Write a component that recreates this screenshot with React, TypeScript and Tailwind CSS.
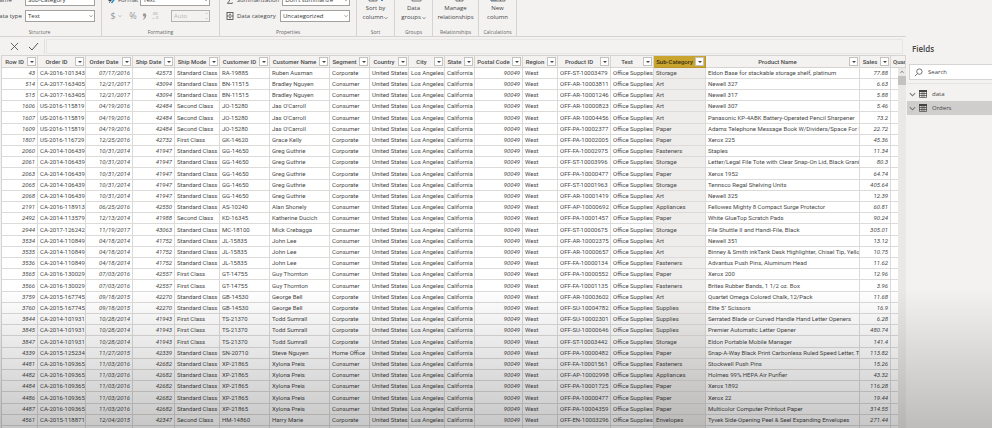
import type { ReactNode } from 'react';

type Column = {
  name: string;
  width: string;
  numeric?: boolean;
  selected?: boolean;
};

const COLUMNS: Column[] = [
  { name: 'Row ID', width: 'w-[36px]', numeric: true },
  { name: 'Order ID', width: 'w-[48px]' },
  { name: 'Order Date', width: 'w-[47px]', numeric: true },
  { name: 'Ship Date', width: 'w-[42px]', numeric: true },
  { name: 'Ship Mode', width: 'w-[45px]' },
  { name: 'Customer ID', width: 'w-[50px]' },
  { name: 'Customer Name', width: 'w-[60px]' },
  { name: 'Segment', width: 'w-[40px]' },
  { name: 'Country', width: 'w-[39px]' },
  { name: 'City', width: 'w-[36px]' },
  { name: 'State', width: 'w-[30px]' },
  { name: 'Postal Code', width: 'w-[48px]', numeric: true },
  { name: 'Region', width: 'w-[35px]' },
  { name: 'Product ID', width: 'w-[53px]' },
  { name: 'Test', width: 'w-[43px]' },
  { name: 'Sub-Category', width: 'w-[52px]', selected: true },
  { name: 'Product Name', width: 'w-auto' },
  { name: 'Sales', width: 'w-[31px]', numeric: true },
  { name: 'Quantity', width: 'w-[15px]' },
];

// row id | order id | order date | ship date | ship mode | customer id | customer | segment | product id | sub-category | product | sales
const ORDERS = `
43|CA-2016-101343|07/17/2016|42573|Standard Class|RA-19885|Ruben Ausman|Corporate|OFF-ST-10003479|Storage|Eldon Base for stackable storage shelf, platinum|77.88
514|CA-2017-163405|12/21/2017|43094|Standard Class|BN-11515|Bradley Nguyen|Consumer|OFF-AR-10003811|Art|Newell 327|6.63
515|CA-2017-163405|12/21/2017|43094|Standard Class|BN-11515|Bradley Nguyen|Consumer|OFF-AR-10001246|Art|Newell 317|5.88
1606|US-2016-115819|04/19/2016|42484|Second Class|JO-15280|Jas O'Carroll|Consumer|OFF-AR-10000823|Art|Newell 307|5.46
1607|US-2016-115819|04/19/2016|42484|Second Class|JO-15280|Jas O'Carroll|Consumer|OFF-AR-10004456|Art|Panasonic KP-4ABK Battery-Operated Pencil Sharpener|73.2
1609|US-2016-115819|04/19/2016|42484|Second Class|JO-15280|Jas O'Carroll|Consumer|OFF-PA-10002377|Paper|Adams Telephone Message Book W/Dividers/Space For Ph|22.72
1807|US-2016-116729|12/25/2016|42732|First Class|GK-14620|Grace Kelly|Corporate|OFF-PA-10002005|Paper|Xerox 225|45.36
2060|CA-2014-106439|10/31/2014|41947|Standard Class|GG-14650|Greg Guthrie|Corporate|OFF-FA-10002975|Fasteners|Staples|11.34
2061|CA-2014-106439|10/31/2014|41947|Standard Class|GG-14650|Greg Guthrie|Corporate|OFF-ST-10003996|Storage|Letter/Legal File Tote with Clear Snap-On Lid, Black Granit|80.3
2063|CA-2014-106439|10/31/2014|41947|Standard Class|GG-14650|Greg Guthrie|Corporate|OFF-PA-10000477|Paper|Xerox 1952|64.74
2065|CA-2014-106439|10/31/2014|41947|Standard Class|GG-14650|Greg Guthrie|Corporate|OFF-ST-10001963|Storage|Tennsco Regal Shelving Units|405.64
2068|CA-2014-106439|10/31/2014|41947|Standard Class|GG-14650|Greg Guthrie|Corporate|OFF-AR-10001419|Art|Newell 325|12.39
2191|CA-2016-118913|06/25/2016|42550|Standard Class|AS-10240|Alan Shonely|Consumer|OFF-AP-10000692|Appliances|Fellowes Mighty 8 Compact Surge Protector|60.81
2492|CA-2014-113579|12/13/2014|41988|Second Class|KD-16345|Katherine Ducich|Consumer|OFF-PA-10001457|Paper|White GlueTop Scratch Pads|90.24
2944|CA-2017-126242|11/19/2017|43063|Standard Class|MC-18100|Mick Crebagga|Consumer|OFF-ST-10000675|Storage|File Shuttle II and Handi-File, Black|305.01
3534|CA-2014-110849|04/18/2014|41752|Standard Class|JL-15835|John Lee|Consumer|OFF-AR-10002375|Art|Newell 351|13.12
3535|CA-2014-110849|04/18/2014|41752|Standard Class|JL-15835|John Lee|Consumer|OFF-AR-10000657|Art|Binney & Smith inkTank Desk Highlighter, Chisel Tip, Yellow|10.75
3536|CA-2014-110849|04/18/2014|41752|Standard Class|JL-15835|John Lee|Consumer|OFF-FA-10000134|Fasteners|Advantus Push Pins, Aluminum Head|11.62
3565|CA-2016-130029|07/03/2016|42557|First Class|GT-14755|Guy Thornton|Consumer|OFF-PA-10000552|Paper|Xerox 200|12.96
3566|CA-2016-130029|07/03/2016|42557|First Class|GT-14755|Guy Thornton|Consumer|OFF-FA-10001135|Fasteners|Brites Rubber Bands, 1 1/2 oz. Box|3.96
3759|CA-2015-167745|09/18/2015|42270|Standard Class|GB-14530|George Bell|Corporate|OFF-AR-10003602|Art|Quartet Omega Colored Chalk, 12/Pack|11.68
3760|CA-2015-167745|09/18/2015|42270|Standard Class|GB-14530|George Bell|Corporate|OFF-SU-10004782|Supplies|Elite 5" Scissors|16.9
3844|CA-2014-101931|10/28/2014|41943|First Class|TS-21370|Todd Sumrall|Corporate|OFF-SU-10002301|Supplies|Serrated Blade or Curved Handle Hand Letter Openers|6.28
3845|CA-2014-101931|10/28/2014|41943|First Class|TS-21370|Todd Sumrall|Corporate|OFF-SU-10000646|Supplies|Premier Automatic Letter Opener|480.74
3847|CA-2014-101931|10/28/2014|41943|First Class|TS-21370|Todd Sumrall|Corporate|OFF-ST-10003442|Storage|Eldon Portable Mobile Manager|141.4
4339|CA-2015-125234|11/27/2015|42339|Standard Class|SN-20710|Steve Nguyen|Home Office|OFF-PA-10000482|Paper|Snap-A-Way Black Print Carbonless Ruled Speed Letter, Tri|113.82
4481|CA-2016-109365|11/03/2016|42682|Standard Class|XP-21865|Xylona Preis|Consumer|OFF-FA-10001561|Fasteners|Stockwell Push Pins|15.26
4482|CA-2016-109365|11/03/2016|42682|Standard Class|XP-21865|Xylona Preis|Consumer|OFF-AP-10002998|Appliances|Holmes 99% HEPA Air Purifier|43.32
4484|CA-2016-109365|11/03/2016|42682|Standard Class|XP-21865|Xylona Preis|Consumer|OFF-PA-10001725|Paper|Xerox 1892|116.28
4486|CA-2016-109365|11/03/2016|42682|Standard Class|XP-21865|Xylona Preis|Consumer|OFF-PA-10000477|Paper|Xerox 22|19.44
4487|CA-2016-109365|11/03/2016|42682|Standard Class|XP-21865|Xylona Preis|Consumer|OFF-PA-10004359|Paper|Multicolor Computer Printout Paper|314.55
4561|CA-2015-118871|12/04/2015|42347|Second Class|HM-14860|Harry Marie|Corporate|OFF-EN-10003296|Envelopes|Tyvek Side-Opening Peel & Seel Expanding Envelopes|271.44
`;

// Every order here shares country, city, state, postal code, region and category
const ROWS = ORDERS.trim()
  .split('\n')
  .map((line) => {
    const f = line.split('|');
    return [
      ...f.slice(0, 8),
      'United States',
      'Los Angeles',
      'California',
      '90049',
      'West',
      f[8],
      'Office Supplies',
      ...f.slice(9),
      '',
    ];
  });

function Chevron({ className = '' }: { className?: string }) {
  return (
    <svg viewBox="0 0 8 8" className={className} fill="none" stroke="currentColor" strokeWidth="1.2">
      <path d="M1 2.5 4 5.5 7 2.5" />
    </svg>
  );
}

function SelectBox({ id, value }: { id: string; value: string }) {
  return (
    <div className="relative w-[70px]">
      <select
        id={id}
        className="block h-3 w-full appearance-none border border-[#a3a19f] bg-white pl-[2px] text-[6px] leading-[10px] text-[#333]"
      >
        <option>{value}</option>
      </select>
      <Chevron className="pointer-events-none absolute top-1 right-[2px] size-1 text-[#555]" />
    </div>
  );
}

function RibbonGroup({ title, className, children }: { title: string; className: string; children: ReactNode }) {
  return (
    <section
      className={`flex shrink-0 flex-col items-stretch justify-end border-r border-[#d6d4d2] ${className}`}
    >
      {children}
      <h2 className="mt-[6px] text-center text-[5px] leading-[8px] whitespace-nowrap text-[#666]">{title}</h2>
    </section>
  );
}

function RibbonButton({ lines, menu, icon }: { lines: [string, string]; menu?: boolean; icon: ReactNode }) {
  return (
    <button className="flex flex-col items-center text-[6px] leading-[9px] whitespace-nowrap text-[#444]">
      {icon}
      <span className="mt-[2px]">{lines[0]}</span>
      <span className="flex items-center gap-[1px]">
        {lines[1]}
        {menu && <Chevron className="size-1" />}
      </span>
    </button>
  );
}

function Ribbon() {
  return (
    <header className="flex h-9 shrink-0 overflow-hidden">
      {/* First group is scrolled partly past the left edge */}
      <RibbonGroup title="Structure" className="-ml-[22px] w-[124px]">
        <div className="grid grid-cols-[27px_70px] items-center justify-end gap-x-[3px] gap-y-1 pr-[6px]">
          <label htmlFor="name">Name</label>
          <input
            id="name"
            defaultValue="Sub-Category"
            className="h-3 w-full border border-[#a3a19f] bg-white pl-[2px] text-[6px] text-[#333]"
          />
          <label htmlFor="data-type" className="whitespace-nowrap">
            Data type
          </label>
          <SelectBox id="data-type" value="Text" />
        </div>
      </RibbonGroup>

      <RibbonGroup title="Formatting" className="w-[118px]">
        <div className="flex flex-col gap-1 pr-[9px] pl-[6px]">
          <div className="flex h-3 items-center gap-[2px]">
            <svg viewBox="0 0 16 16" className="size-2" fill="none" strokeWidth="2">
              <path d="M1 9h6M2 13l3-2" stroke="#444" />
              <path d="M7 14 14 5" stroke="#2b88c8" strokeWidth="3" />
            </svg>
            <label htmlFor="format" className="flex-1">
              Format
            </label>
            <SelectBox id="format" value="Text" />
          </div>
          <div className="flex h-3 items-center text-[#999]">
            <button className="w-[10px] text-[9px]">$</button>
            <Chevron className="size-1" />
            <button className="ml-1 w-[14px] text-[9px]">%</button>
            <button aria-label="Thousands separator" className="ml-[2px]">
              <svg viewBox="0 0 8 12" className="h-[7px] w-[5px]" fill="currentColor">
                <circle cx="4" cy="3.5" r="3" />
                <path d="M7 3.5C7 8 5 10 2 11.5L1.500 10C3.500 9 4.500 7.500 4 5Z" />
              </svg>
            </button>
            <button className="ml-1 flex flex-col text-[4px] leading-[4px]">
              <span>.00</span>
              <span>→.0</span>
            </button>
            <div className="relative ml-auto">
              <input
                aria-label="Decimal places"
                defaultValue="Auto"
                className="block h-3 w-[39px] border border-[#b5b3b1] pl-[2px] text-[6px] text-[#b5b3b1]"
              />
              <Chevron className="pointer-events-none absolute top-[2px] right-[2px] size-[3px] rotate-180" />
              <Chevron className="pointer-events-none absolute right-[2px] bottom-[2px] size-[3px]" />
            </div>
          </div>
        </div>
      </RibbonGroup>

      <RibbonGroup title="Properties" className="w-[137px]">
        <div className="flex flex-col gap-1 px-[6px]">
          <div className="flex h-3 items-center gap-[3px]">
            <svg viewBox="0 0 16 16" className="size-2" fill="none" stroke="#444" strokeWidth="1.600">
              <path d="M13 3V1H3l5 7-5 7h10v-2" />
            </svg>
            <label htmlFor="summarization" className="flex-1">
              Summarization
            </label>
            <SelectBox id="summarization" value="Don't summarize" />
          </div>
          <div className="flex h-3 items-center gap-[3px]">
            <svg viewBox="0 0 16 16" className="size-2" fill="none" stroke="#444" strokeWidth="1.600">
              <rect x="2" y="1" width="12" height="14" />
              <path d="M2 8h12M6 4.500h4M6 11.500h4" />
            </svg>
            <label htmlFor="data-category" className="flex-1">
              Data category
            </label>
            <SelectBox id="data-category" value="Uncategorized" />
          </div>
        </div>
      </RibbonGroup>

      <RibbonGroup title="Sort" className="w-[38px]">
        <RibbonButton
          lines={['Sort by', 'column']}
          menu
          icon={
            <svg viewBox="0 0 18 16" className="h-4 w-[18px]" fill="none">
              <path d="M2 2v13h8V2M6 2v13M2 11h8" stroke="#777" />
              <path d="M15 2v13M13 12.500l2 2.500 2-2.500" stroke="#2b88c8" />
            </svg>
          }
        />
      </RibbonGroup>
      <RibbonGroup title="Groups" className="w-[38px]">
        <RibbonButton
          lines={['Data', 'groups']}
          menu
          icon={
            <svg viewBox="0 0 16 16" className="size-4" fill="none">
              <path d="M1 2v10h4M6 2v13h9V2M8 12.500h5" stroke="#777" />
              <path d="M8 10h5" stroke="#2b88c8" />
            </svg>
          }
        />
      </RibbonGroup>
      <RibbonGroup title="Relationships" className="w-[46px]">
        <RibbonButton
          lines={['Manage', 'relationships']}
          icon={
            <svg viewBox="0 0 18 16" className="h-4 w-[18px]" fill="none" stroke="#777">
              <path d="M1 2v9h6M9 2v13h7V2M9 11h7M12.500 8v7" />
            </svg>
          }
        />
      </RibbonGroup>
      <RibbonGroup title="Calculations" className="w-[38px]">
        <RibbonButton
          lines={['New', 'column']}
          icon={
            <svg viewBox="0 0 16 16" className="size-4" fill="none">
              <path d="M1 2h5v13H1z" fill="#6cb2e6" />
              <path d="M1 2v13h14V2M6 2v13M10.500 2v13M1 11h14" stroke="#777" />
            </svg>
          }
        />
      </RibbonGroup>
    </header>
  );
}

function FormulaBar() {
  return (
    <div className="flex h-[19px] shrink-0 border-t border-[#d6d4d2] px-[3px] pt-[2px] pb-[1px]">
      <div className="flex w-[42px] items-center justify-center gap-[9px] border-r border-[#e1dfdd] pl-[2px] text-[#555]">
        <button aria-label="Cancel">
          <svg viewBox="0 0 10 10" className="size-[9px]" fill="none" stroke="currentColor">
            <path d="M1 1 9 9M9 1 1 9" />
          </svg>
        </button>
        <button aria-label="Commit">
          <svg viewBox="0 0 11 9" className="h-[9px] w-[11px]" fill="none" stroke="currentColor">
            <path d="M1 5 4 8 10 1" />
          </svg>
        </button>
      </div>
      <input aria-label="Formula" className="ml-[1px] min-w-0 flex-1 border border-[#e8e6e4] bg-[#f3f2f1]" />
    </div>
  );
}

function HeaderCell({ column, last }: { column: Column; last: boolean }) {
  return (
    <th
      className={`overflow-hidden border-r border-b p-0 font-medium ${column.width} ${
        column.selected ? 'border-[#b8962a] bg-[#c9a42e] text-[#3a3214]' : 'border-[#d6d4d2] bg-[#f3f2f1]'
      }`}
    >
      <div className="flex h-[11px] items-center">
        <span className={last ? 'pl-[2px]' : 'flex-1 text-center'}>{column.name}</span>
        {!last && (
          <button
            aria-label={`Filter ${column.name}`}
            className="mr-[1px] flex size-[9px] shrink-0 items-center justify-center border border-[#c4c2c0] bg-white"
          >
            <svg viewBox="0 0 4 2" className="h-[2px] w-1" fill="#444">
              <path d="M0 0h4L2 2z" />
            </svg>
          </button>
        )}
      </div>
    </th>
  );
}

function DataGrid() {
  return (
    <div className="relative min-h-0 flex-1 overflow-hidden border-t border-l border-[#d6d4d2] bg-white">
      <table className="w-full table-fixed border-separate border-spacing-0 font-['Roboto',sans-serif] text-[6px] leading-[10px] whitespace-nowrap text-[#4a4a4a]">
        <thead>
          <tr>
            {COLUMNS.map((column, i) => (
              <HeaderCell key={column.name} column={column} last={i === COLUMNS.length - 1} />
            ))}
          </tr>
        </thead>
        <tbody>
          {[...ROWS, COLUMNS.map(() => '')].map((row, r) => (
            <tr key={r} className="h-[11px] nth-[5n]:h-[12px]">
              {row.map((value, i) => (
                <td
                  key={COLUMNS[i].name}
                  className={`overflow-hidden border-r border-b border-[#dddbd9] py-0 ${
                    COLUMNS[i].numeric ? 'px-[2px] text-right italic' : 'pr-0 pl-[2px] text-left'
                  } ${COLUMNS[i].selected ? 'bg-[#efedec]' : ''}`}
                >
                  {value}
                </td>
              ))}
            </tr>
          ))}
        </tbody>
      </table>

      {/* Scrollbar covers the body only, the header runs above it */}
      <div className="absolute top-3 right-0 bottom-0 flex w-2 flex-col bg-[#e9e8e7]">
        <Chevron className="m-[2px] size-1 rotate-180 text-[#333]" />
        <div className="h-[9px] bg-[#c3c2c1]" />
      </div>
    </div>
  );
}

function FieldsPane() {
  return (
    <aside className="w-[86px] shrink-0 pl-[1px] text-[6px] text-[#444]">
      <h2 className="px-[5px] pt-[7px] pb-[9px] text-[8px] leading-3 font-semibold">Fields</h2>
      <label className="ml-[2px] flex h-4 items-center gap-[5px] border border-r-0 border-[#d6d4d2] bg-white pl-1">
        <svg viewBox="0 0 10 10" className="size-[9px] shrink-0" fill="none" stroke="#555" strokeWidth=".9">
          <circle cx="6" cy="4" r="3" />
          <path d="M4 6 1 9" />
        </svg>
        <input aria-label="Search fields" placeholder="Search" className="w-full min-w-0 placeholder:text-[#444]" />
      </label>
      <ul className="mt-[3px] border-t border-[#e6e4e2] pt-[3px]">
        {['data', 'Orders'].map((table) => (
          <li key={table}>
            <button
              className={`flex h-[14px] w-full items-center pl-[2px] ${table === 'Orders' ? 'bg-[#cfcecd]' : ''}`}
            >
              <Chevron className="size-[7px] text-[#777]" />
              <svg viewBox="0 0 8 8" className="ml-[3px] size-2" fill="none" stroke="#444">
                <path d="M0 1h8" strokeWidth="2" />
                <path d="M.5 1v6.500h7V1M3 1v6M5 1v6M0 3.500h8M0 5.500h8" strokeWidth=".7" />
              </svg>
              <span className="ml-[5px]">{table}</span>
            </button>
          </li>
        ))}
      </ul>
    </aside>
  );
}

export default function App() {
  return (
    <div className="relative flex h-screen flex-col overflow-hidden bg-[#f3f2f1] font-['Open_Sans',sans-serif] text-[6px] leading-[10px] text-[#444]">
      <Ribbon />
      <div className="flex min-h-0 flex-1">
        <main className="flex min-w-0 flex-1 flex-col">
          <FormulaBar />
          <div className="flex min-h-0 flex-1 pl-[1px]">
            <DataGrid />
          </div>
        </main>
        <FieldsPane />
      </div>
      {/* Shade rising from the bottom edge */}
      <div className="pointer-events-none absolute inset-x-0 bottom-0 h-[140px] bg-linear-to-t from-black/22 to-transparent" />
    </div>
  );
}
